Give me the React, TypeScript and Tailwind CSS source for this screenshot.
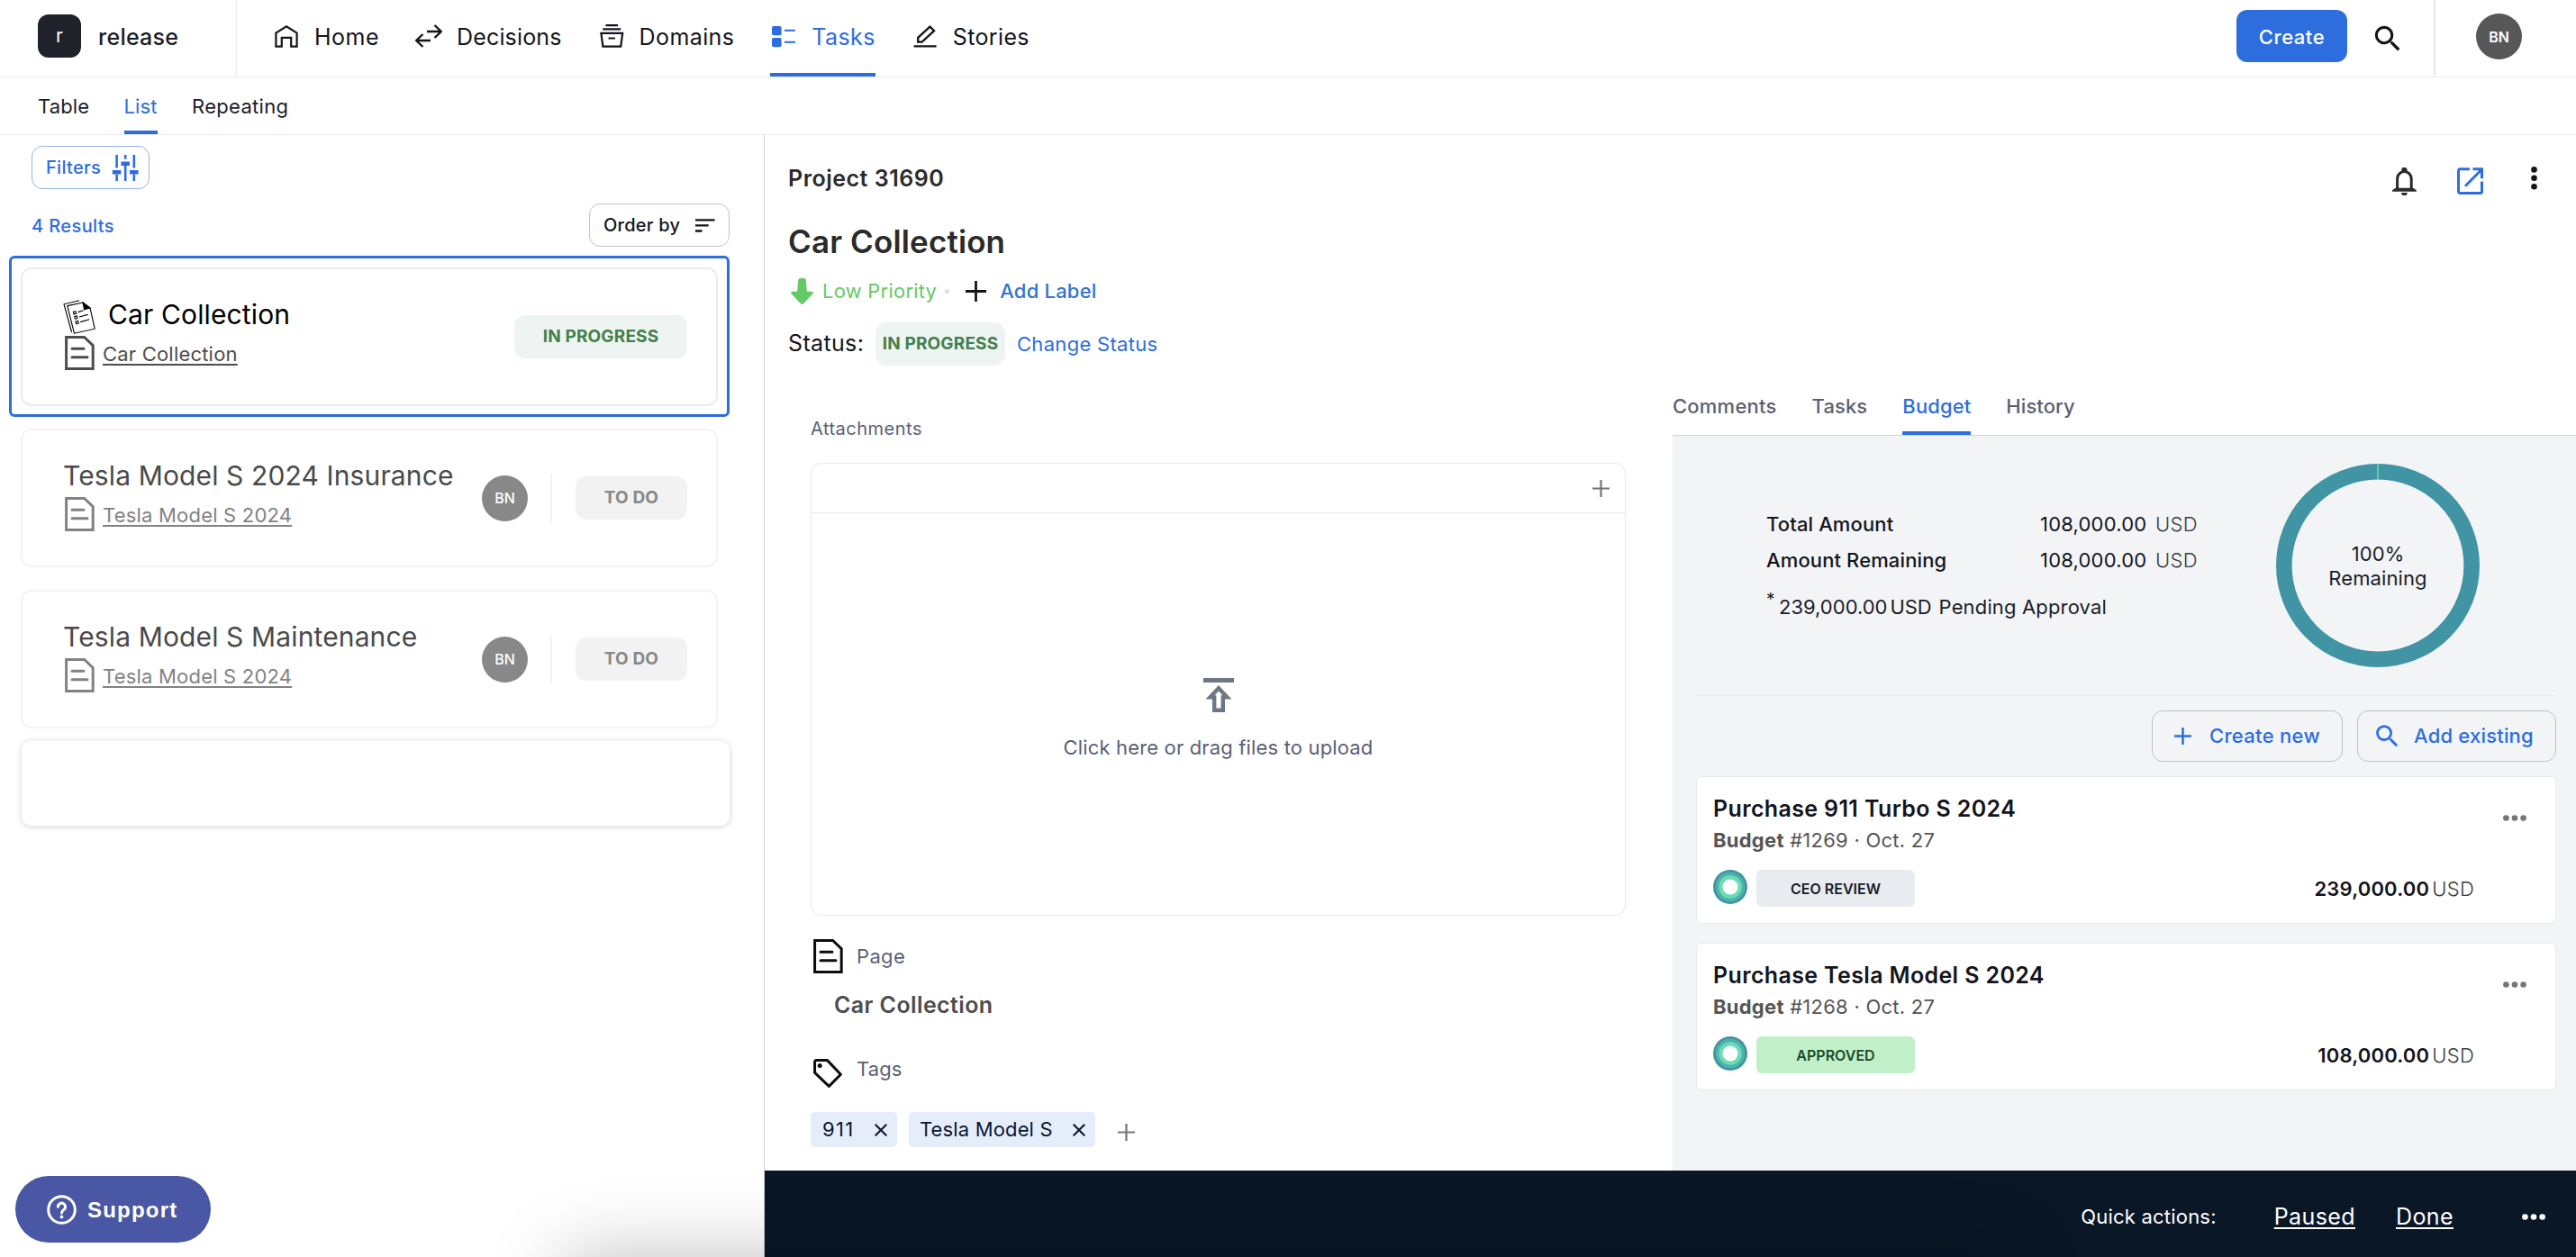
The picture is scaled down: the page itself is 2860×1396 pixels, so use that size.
import type { ReactNode } from "react";
import clsx from "clsx";
import { MdSearch } from "react-icons/md";

function HomeIcon() {
  return (
    <svg width="30" height="30" viewBox="0 0 30 30" fill="none" stroke="currentColor" strokeWidth="2.2">
      <path d="M3.4 26.6V11.6L15 4.2l11.6 7.4v15h-6.4v-9.8H9.8v9.8z" />
    </svg>
  );
}

function DecisionsIcon() {
  return (
    <svg width="30" height="30" viewBox="0 0 30 30" fill="none" stroke="currentColor" strokeWidth="2.4">
      <path d="M13 10h16M21.5 3l7.3 7-7.3 7M17 20H1.2M8.5 13l-7.3 7 7.3 7" />
    </svg>
  );
}

function DomainsIcon() {
  return (
    <svg width="30" height="30" viewBox="0 0 30 30" fill="none" stroke="currentColor" strokeWidth="2.2">
      <path d="M8.5 3.2h13.5M5.2 7.4h20M3.4 11.8h23.8l-2 14.8H5.4zM11.5 17.5h7.5" />
    </svg>
  );
}

function TasksIcon() {
  return (
    <svg width="30" height="30" viewBox="0 0 30 30" fill="currentColor">
      <rect x="2" y="4" width="10.6" height="10.2" rx="2" />
      <rect x="2" y="17" width="10.6" height="10.2" rx="2" />
      <rect x="16" y="7.8" width="12" height="2" />
      <rect x="16" y="20.8" width="12" height="2" />
    </svg>
  );
}

function StoriesIcon() {
  return (
    <svg width="30" height="30" viewBox="0 0 30 30" fill="none" stroke="currentColor" strokeWidth="2.3">
      <path d="M20.5 4.6l4.6 4.6L11.6 21.6H7.2v-4.8zM2.6 26.4h25" />
    </svg>
  );
}

function SlidersIcon() {
  return (
    <svg width="30" height="31" viewBox="0 0 30 31" fill="none" stroke="currentColor" strokeWidth="2.6">
      <path d="M5.6 1v14.6M5.6 22.6V30M15.2 1v4.7M15.2 13v17M24.8 1v14.6M24.8 22.6V30" />
      <path strokeWidth="4.6" d="M.8 20.3h9.6M10.4 10.7H20M20 20.3h9.6" />
    </svg>
  );
}

function DocIcon({ className }: { className?: string }) {
  return (
    <svg className={className} width="33" height="38" viewBox="0 0 33 38" fill="none" stroke="currentColor" strokeWidth="3">
      <path d="M1.6 1.5h20l9.6 9.2v25.8H1.6z" />
      <path strokeLinecap="round" d="M8 14.2h13M8 23.8h17" />
    </svg>
  );
}

function ChecklistIcon() {
  return (
    <svg width="36" height="38" viewBox="0 0 36 38" fill="none" stroke="currentColor" strokeWidth="1.1">
      <path d="M9.6 36L1 4.8 18 .8" />
      <path d="M4.8 6.6L22 3l8 6 5.2 23.2-22.8 5z" />
      <path fill="currentColor" d="M22 3l8 6-6.4 1.8z" />
      <path d="M11.4 13.4l2.6-.6.6 2.6-2.6.6zM12.8 18.6l2.6-.6.6 2.6-2.6.6zM14 24l2.6-.6.6 2.6-2.6.6zM16.6 13.6l6-1.8M18 19l9.6-2.6M19.2 24.6l10-2.8" />
    </svg>
  );
}

function BellIcon() {
  return (
    <svg width="27" height="31" viewBox="0 0 27 31" fill="none">
      <path fill="currentColor" d="M10.2 4V3a3.2 3.2 0 0 1 6.4 0v1zM10 28h6.8a3.4 3.4 0 0 1-6.8 0z" />
      <path stroke="currentColor" strokeWidth="3" d="M5.6 24.5V12.4a7.8 7.8 0 0 1 15.6 0v12.1" />
      <path fill="currentColor" d="M3.6 22.8h19.6l3.6 2.4v1.6H0v-1.6z" />
    </svg>
  );
}

function ExternalIcon() {
  return (
    <svg width="29" height="30" viewBox="0 0 29 30" fill="none" stroke="currentColor" strokeWidth="3">
      <path d="M14 1.7H3.2a1.7 1.7 0 0 0-1.7 1.7v23.4a1.7 1.7 0 0 0 1.7 1.7h22.6a1.7 1.7 0 0 0 1.7-1.7V15.5" />
      <path d="M17.5 1.7h10v10.5M9 20.8L26.5 3" />
    </svg>
  );
}

function PlusIcon({ size, stroke }: { size: number; stroke: number }) {
  return (
    <svg width={size} height={size} viewBox={`0 0 ${size} ${size}`} stroke="currentColor" strokeWidth={stroke}>
      <path d={`M${size / 2} 0v${size}M0 ${size / 2}h${size}`} />
    </svg>
  );
}

function Dots({ className }: { className?: string }) {
  return (
    <svg className={className} width="26" height="7" viewBox="0 0 26 7" fill="currentColor">
      <circle cx="3.4" cy="3.5" r="3.3" />
      <circle cx="13" cy="3.5" r="3.3" />
      <circle cx="22.6" cy="3.5" r="3.3" />
    </svg>
  );
}

const NAV = [
  { label: "Home", icon: <HomeIcon />, tracking: "tracking-[0.5px]" },
  { label: "Decisions", icon: <DecisionsIcon />, tracking: "tracking-[0.15px]" },
  { label: "Domains", icon: <DomainsIcon />, tracking: "tracking-[0.4px]" },
  { label: "Tasks", icon: <TasksIcon />, tracking: "tracking-[0.4px]", active: true },
  { label: "Stories", icon: <StoriesIcon />, tracking: "tracking-[0.35px]" },
];

const TASKS = [
  { title: "Car Collection", page: "Car Collection", status: "IN PROGRESS", selected: true },
  { title: "Tesla Model S 2024 Insurance", page: "Tesla Model S 2024", status: "TO DO", assignee: "BN" },
  { title: "Tesla Model S Maintenance", page: "Tesla Model S 2024", status: "TO DO", assignee: "BN" },
];

const BUDGETS = [
  { title: "Purchase 911 Turbo S 2024", id: "#1269", date: "Oct. 27", status: "CEO REVIEW", amount: "239,000.00" },
  { title: "Purchase Tesla Model S 2024", id: "#1268", date: "Oct. 27", status: "APPROVED", amount: "108,000.00" },
];

function Header() {
  return (
    <header className="flex h-[86px] shrink-0 border-b border-[#e9ebee]">
      <div className="flex w-[263px] items-center gap-[19px] border-r border-[#e9ebee] pb-[5px] pl-[42px]">
        <div className="flex size-12 items-center justify-center rounded-xl bg-[#1f222b] text-[21px] text-white">
          r
        </div>
        <span className="pt-[3px] text-[25px] font-medium tracking-[0.25px] text-[#1b1d28]">
          release
        </span>
      </div>
      <nav className="flex flex-1 gap-10 pl-10">
        {NAV.map((item) => (
          <a
            key={item.label}
            className={clsx(
              "flex items-center gap-4 border-b-4 pt-[3px] text-[25px]",
              item.tracking,
              item.active ? "border-[#2e6ddf] text-[#2e6ddf]" : "border-transparent text-[#14151c]"
            )}
          >
            <span className="pb-1">{item.icon}</span>
            {item.label}
          </a>
        ))}
      </nav>
      <div className="flex items-center pb-[5px]">
        <button className="h-[58px] w-[123px] rounded-xl bg-[#2e6ddd] pt-[2px] text-[22px] font-medium tracking-[0.55px] text-white">
          Create
        </button>
        <MdSearch size={38} className="mt-[5px] mr-8 ml-[26px] text-[#14151c]" />
      </div>
      <div className="flex items-center border-l-2 border-[#e6eaf0] pr-[60px] pb-1 pl-[45px]">
        <div className="flex size-[51px] items-center justify-center rounded-full bg-[#575757] text-[16px] font-semibold text-white">
          BN
        </div>
      </div>
    </header>
  );
}

function SubTabs() {
  return (
    <div className="flex h-16 shrink-0 gap-[38.5px] border-b border-[#e9ebee] pl-[42px] text-[22px] tracking-[0.1px] text-[#1b1d28]">
      {["Table", "List", "Repeating"].map((tab) => (
        <a
          key={tab}
          className={clsx(
            "flex items-center border-y-4 border-transparent pt-px",
            tab === "List" && "border-b-[#2e6ddf] text-[#2e6ddf]",
            tab === "Repeating" && "tracking-[0.3px]"
          )}
        >
          {tab}
        </a>
      ))}
    </div>
  );
}

function TaskCard({ task }: { task: (typeof TASKS)[number] }) {
  return (
    <div
      className={clsx(
        "h-[179px] rounded-[6px] border-[3px] p-[10px]",
        task.selected ? "border-[#2e6ddf]" : "border-transparent"
      )}
    >
      <article
        className={clsx(
          "flex h-[154px] items-center justify-between rounded-xl border-2 pr-8 pl-[45px]",
          task.selected ? "border-[#e9ecf1]" : "border-[#f2f3f6]"
        )}
      >
        <div className="pb-[10px]">
          <h3
            className={clsx(
              "flex items-end text-[30px] leading-[44px] tracking-[0.13px]",
              task.selected ? "gap-[14px] text-black" : "text-[#4a4a4a]"
            )}
          >
            {task.selected && <ChecklistIcon />}
            {task.title}
          </h3>
          <div
            className={clsx(
              "mt-[2px] flex items-center gap-[9px] pl-[2px] text-[22px] leading-[38px] tracking-[0.2px]",
              task.selected ? "text-[#4d4d4d]" : "text-[#828282]"
            )}
          >
            <DocIcon />
            <a className="pt-px underline decoration-2 underline-offset-[3px]">{task.page}</a>
          </div>
        </div>
        <div className="flex items-center">
          {task.assignee && (
            <>
              <div className="flex size-[51px] items-center justify-center rounded-full bg-[#888] text-[16px] font-medium text-white">
                {task.assignee}
              </div>
              <div className="mr-[26px] ml-[25px] h-[54px] w-[2px] bg-[#f2f3f6]" />
            </>
          )}
          <div
            className={clsx(
              "flex h-12 items-center justify-center rounded-xl text-[19px] font-bold tracking-[0.15px]",
              task.selected ? "w-[192px] bg-[#eef4f1] text-[#43804d]" : "w-[124px] bg-[#f2f2f2] text-[#888]"
            )}
          >
            {task.status}
          </div>
        </div>
      </article>
    </div>
  );
}

function TaskList() {
  return (
    <aside className="flex w-[849px] shrink-0 flex-col border-r border-[#cfcfd2] pt-3">
      <button className="ml-[35px] flex h-12 w-[131px] items-center gap-3 rounded-xl border border-[#92b2f0] pl-[15px] text-[20px] font-medium tracking-[0.3px] text-[#2e6ddf]">
        Filters
        <SlidersIcon />
      </button>
      <div className="mt-4 flex items-center justify-between pr-[38px] pl-[35px]">
        <span className="pt-px text-[20px] font-medium tracking-[0.4px] text-[#2e6ddf]">4 Results</span>
        <button className="flex h-12 w-[156px] items-center gap-[17px] rounded-xl border border-[#c4c4c4] pl-[15px] text-[20px] font-medium tracking-[0.22px] text-[#14151c]">
          Order by
          <svg width="22" height="15" viewBox="0 0 22 15" stroke="currentColor" strokeWidth="2.3">
            <path d="M0 1.3h21.6M0 7.4h14.6M0 13.5h7.5" />
          </svg>
        </button>
      </div>
      <div className="mt-[10px] pr-[38px] pl-[10px]">
        {TASKS.map((task) => (
          <TaskCard key={task.title} task={task} />
        ))}
        <div className="mt-[2px] ml-[14px] h-[94px] rounded-[10px] bg-white shadow-[0_1px_7px_rgba(20,20,50,0.19)]" />
      </div>
    </aside>
  );
}

function TaskSummary() {
  return (
    <div className="pt-7 pr-[43px] pl-[26px]">
      <div className="flex h-10 items-start">
        <p className="flex-1 text-[25px] leading-10 font-semibold tracking-[0.5px] text-[#2b2b2b]">
          Project 31690
        </p>
        <span className="mt-2 mr-[45px] text-[#2b2b2b]">
          <BellIcon />
        </span>
        <span className="mt-2 mr-[53px] text-[#2e6ddf]">
          <ExternalIcon />
        </span>
        <svg className="mt-[7px]" width="7" height="26" viewBox="0 0 7 26" fill="#14151c">
          <circle cx="3.5" cy="3.4" r="3.3" />
          <circle cx="3.5" cy="12.8" r="3.3" />
          <circle cx="3.5" cy="22.3" r="3.3" />
        </svg>
      </div>
      <h1 className="mt-5 text-[35px] leading-[60px] font-semibold tracking-[0.13px] text-[#2b2b2b]">
        Car Collection
      </h1>
      <div className="mt-[5px] flex h-10 items-center text-[22px]">
        <svg className="ml-[3px]" width="25" height="29" viewBox="0 0 25 29" fill="#65c966">
          <path d="M10.2 0h4.6a2 2 0 0 1 2 1.8l1 13h5.6a1.4 1.4 0 0 1 1 2.4L14 28.2a2.2 2.2 0 0 1-3 0L.6 17.2a1.4 1.4 0 0 1 1-2.4h5.6l1-13a2 2 0 0 1 2-1.8z" />
        </svg>
        <span className="ml-[10px] tracking-[0.22px] text-[#65c966]">Low Priority</span>
        <span className="ml-[9px] size-[5px] rounded-full bg-[#e0e0e0]" />
        <span className="ml-[18px] text-[#14151c]">
          <PlusIcon size={23} stroke={2.8} />
        </span>
        <a className="ml-[15px] font-medium tracking-[0.2px] text-[#3573cf]">Add Label</a>
      </div>
      <div className="mt-[15px] flex h-12 items-center">
        <span className="w-[97px] text-[25px] tracking-[0.35px] text-[#14151c]">Status:</span>
        <span className="flex h-12 w-36 items-center justify-center rounded-xl bg-[#eef4f1] text-[19px] font-bold tracking-[0.15px] text-[#43804d]">
          IN PROGRESS
        </span>
        <a className="ml-[13px] text-[22px] tracking-[0.3px] text-[#2e6ddf]">Change Status</a>
      </div>
    </div>
  );
}

function Tag({ children, className }: { children: ReactNode; className?: string }) {
  return (
    <span className="flex h-[39px] items-center gap-[22.5px] rounded-[5px] bg-[#e6edfa] pr-[11px] pl-3 text-[22px] text-[#0a1733]">
      <span className={className}>{children}</span>
      <svg width="14" height="14" viewBox="0 0 14 14" stroke="currentColor" strokeWidth="2.1">
        <path d="M.7.7l12.6 12.6M13.3.7L.7 13.3" />
      </svg>
    </span>
  );
}

function Details() {
  return (
    <div className="w-[1008px] shrink-0 pt-[50px] pr-[52px] pl-[51px]">
      <p className="text-[20px] leading-10 tracking-[0.5px] text-[#5c5f74]">Attachments</p>
      <div className="mt-[18px] h-[503px] rounded-xl border border-[#e7e9f0]">
        <div className="flex h-[55px] items-center justify-end border-b border-[#e7e9f0] pr-[17px] text-[#757575]">
          <PlusIcon size={19} stroke={2.2} />
        </div>
        <div className="flex flex-col items-center pt-[183px]">
          <svg width="34" height="38" viewBox="0 0 34 38" fill="none" stroke="#6e7885">
            <path strokeWidth="5" d="M0 2.5h34" />
            <path strokeWidth="4.4" d="M17 11.2L26.5 21.4h-4.7v14.4h-9.6V21.4H7.5z" />
          </svg>
          <p className="mt-[25px] text-[22px] leading-7 tracking-[0.16px] text-[#5c5f74]">
            Click here or drag files to upload
          </p>
        </div>
      </div>
      <div className="mt-[26px] flex h-[38px] items-center gap-[15px] pl-[3px]">
        <DocIcon className="text-[#0d0d0d]" />
        <span className="text-[22px] tracking-[0.35px] text-[#5c5f74]">Page</span>
      </div>
      <p className="mt-5 ml-[26px] text-[25px] leading-[30px] font-semibold tracking-[0.4px] text-[#4d4d4d]">
        Car Collection
      </p>
      <div className="mt-[45px] flex h-8 gap-4 pl-[3px]">
        <svg width="32" height="32" viewBox="0 0 32 32" fill="none" stroke="#0d0d0d" strokeWidth="3" strokeLinejoin="round">
          <path d="M3.2 1.6h12.4L30.4 17.2 17.4 30.4 1.6 15.4V3.2a1.6 1.6 0 0 1 1.6-1.6z" />
          <circle cx="7.2" cy="7.4" r="2.5" fill="#0d0d0d" stroke="none" />
        </svg>
        <span className="text-[22px] leading-[22px] tracking-[0.1px] text-[#5c5f74]">Tags</span>
      </div>
      <div className="mt-[27px] flex items-center gap-[13px]">
        <Tag className="pl-px tracking-[1.3px]">911</Tag>
        <Tag className="tracking-[0.15px]">Tesla Model S</Tag>
        <span className="mt-[6px] ml-3 text-[#757575]">
          <PlusIcon size={19} stroke={2.2} />
        </span>
      </div>
    </div>
  );
}

function BudgetChart() {
  return (
    <div className="relative mr-[85px] ml-auto flex size-[226px] items-center justify-center">
      <svg className="absolute inset-0" width="226" height="226" viewBox="0 0 226 226" fill="none">
        <circle cx="113" cy="113" r="104.2" stroke="#4194a4" strokeWidth="17.6" />
        <path d="M113 0v17.6" stroke="#62c9ae" strokeWidth="2" />
      </svg>
      <p className="relative pt-px text-center text-[22px] leading-[27px] tracking-[0.1px] text-[#1b1d28]">
        100%
        <br />
        Remaining
      </p>
    </div>
  );
}

function AmountRow({ label, value }: { label: string; value: string }) {
  return (
    <div className="flex leading-10">
      <span className="w-[304px] font-medium tracking-[0.12px] text-[#14151c]">{label}</span>
      <span className="w-[128px] tracking-[0.2px] text-[#14151c]">{value}</span>
      <span className="font-light tracking-[0.3px] text-[#3c3d42]">USD</span>
    </div>
  );
}

function BudgetCard({ budget }: { budget: (typeof BUDGETS)[number] }) {
  const approved = budget.status === "APPROVED";

  return (
    <article className="h-[164px] rounded-[6px] border border-[#e6eaef] bg-white pt-5 pr-8 pl-[18px]">
      <div className="flex items-start justify-between">
        <div>
          <h4 className="text-[25px] leading-[30px] font-semibold tracking-[0.36px] text-[#14151c]">
            {budget.title}
          </h4>
          <p className="mt-[5px] text-[22px] leading-[30px] tracking-[0.25px] text-[#555]">
            <b className="font-bold">Budget</b> {budget.id} · {budget.date}
          </p>
        </div>
        <Dots className="mt-[22px] text-[#757575]" />
      </div>
      <div className="mt-[18px] flex h-[41px] items-start">
        <svg width="38" height="38" viewBox="0 0 38 38">
          <circle cx="19" cy="19" r="19" fill="#4194a4" />
          <circle cx="19" cy="19" r="16.2" fill="#4fb3a9" />
          <circle cx="19" cy="19" r="12.8" fill="#6bdcb8" />
          <circle cx="19" cy="19" r="8.6" fill="#fff" />
        </svg>
        <span
          className={clsx(
            "ml-[10px] flex h-[41px] w-44 items-center justify-center rounded-[6px] text-[16px] font-semibold",
            approved ? "bg-[#c1efc8] text-[#1c4a2a]" : "bg-[#e8ecf1] text-[#1b1d28]"
          )}
        >
          {budget.status}
        </span>
        <p className="mr-[58px] ml-auto text-[22px] leading-[42px] text-[#14151c]">
          <span className="font-semibold tracking-[0.18px]">{budget.amount}</span>
          <span className="ml-[3px] font-light tracking-[0.3px] text-[#3c3d42]">USD</span>
        </p>
      </div>
    </article>
  );
}

function BudgetPanel() {
  return (
    <div className="flex flex-1 flex-col">
      <div className="flex h-[78px] shrink-0 gap-[39px] border-b border-[#d2d3d6] text-[22px] font-medium text-[#5c5f74]">
        {["Comments", "Tasks", "Budget", "History"].map((tab) => (
          <a
            key={tab}
            className={clsx(
              "flex items-center border-b-4 pt-[17px]",
              tab === "Comments" ? "tracking-[0.22px]" : "tracking-[0.1px]",
              tab === "Budget" ? "border-[#2e6ddf] text-[#2e6ddf]" : "border-transparent"
            )}
          >
            {tab}
          </a>
        ))}
      </div>
      <div className="flex-1 bg-[#f2f4f6] pt-[31px] pr-[22px] pl-[26px]">
        <div className="flex items-start border-b border-[#e6eaf0] pb-[31px] pl-[78px]">
          <div className="pt-[47px] text-[22px]">
            <AmountRow label="Total Amount" value="108,000.00" />
            <AmountRow label="Amount Remaining" value="108,000.00" />
            <p className="mt-3 flex leading-10 text-[#1b1d28]">
              <span className="w-[14px] text-[19px] leading-[23px]">*</span>
              239,000.00
              <span className="ml-[3px] tracking-[-0.1px]">USD</span>
              <span className="ml-2 tracking-[0.15px]">Pending Approval</span>
            </p>
          </div>
          <BudgetChart />
        </div>
        <div className="mt-4 flex justify-end gap-4 text-[22px] font-medium text-[#2e6ddf]">
          <button className="flex h-[57px] w-[212px] items-center gap-5 rounded-xl border border-[#bfc0c2] pl-6 tracking-[0.3px]">
            <PlusIcon size={19} stroke={2.5} />
            Create new
          </button>
          <button className="flex h-[57px] w-[221px] items-center gap-[13px] rounded-xl border border-[#bfc0c2] pl-4 tracking-[0.2px]">
            <MdSearch size={33} />
            Add existing
          </button>
        </div>
        <div className="mt-4 flex flex-col gap-[21px]">
          {BUDGETS.map((budget) => (
            <BudgetCard key={budget.id} budget={budget} />
          ))}
        </div>
      </div>
    </div>
  );
}

function QuickActions() {
  return (
    <footer className="flex h-24 shrink-0 items-center justify-end bg-[#0a1727] pt-[7px] pr-[34px] text-[25px] text-white">
      <span className="mr-16 text-[22px] tracking-[0.2px]">Quick actions:</span>
      <a className="mr-[45px] tracking-[0.4px] underline decoration-2 underline-offset-[3px]">
        Paused
      </a>
      <a className="mr-[76px] tracking-[0.4px] underline decoration-2 underline-offset-[3px]">
        Done
      </a>
      <Dots />
    </footer>
  );
}

export default function App() {
  return (
    <main className="relative flex h-[1396px] w-[2860px] flex-col overflow-hidden bg-white font-['Inter',sans-serif]">
      <Header />
      <SubTabs />
      <div className="flex min-h-0 flex-1">
        <TaskList />
        <section className="flex min-w-0 flex-1 flex-col">
          <TaskSummary />
          <div className="flex min-h-0 flex-1">
            <Details />
            <BudgetPanel />
          </div>
          <QuickActions />
        </section>
      </div>

      {/* soft shadow rising from the bottom edge */}
      <div className="pointer-events-none absolute top-full left-[627px] h-24 w-[1600px] shadow-[0_0_85px_rgba(0,0,0,0.26)]" />

      <button className="absolute bottom-4 left-[17px] flex h-[74px] w-[217px] items-center gap-3 rounded-full bg-[#4957a4] pt-px pl-[35px] font-['Liberation_Sans',sans-serif] text-[24px] font-bold tracking-[1.2px] text-white">
        <svg width="33" height="33" viewBox="0 0 33 33" fill="none" stroke="currentColor" strokeWidth="3">
          <circle cx="16.5" cy="16.5" r="14.8" />
          <path strokeLinecap="round" d="M12.4 13.2a4.1 4.1 0 1 1 6.4 3.4c-1.5 1-2.3 1.8-2.3 3.4" />
          <circle cx="16.5" cy="24.4" r="1.9" fill="currentColor" stroke="none" />
        </svg>
        Support
      </button>
    </main>
  );
}
